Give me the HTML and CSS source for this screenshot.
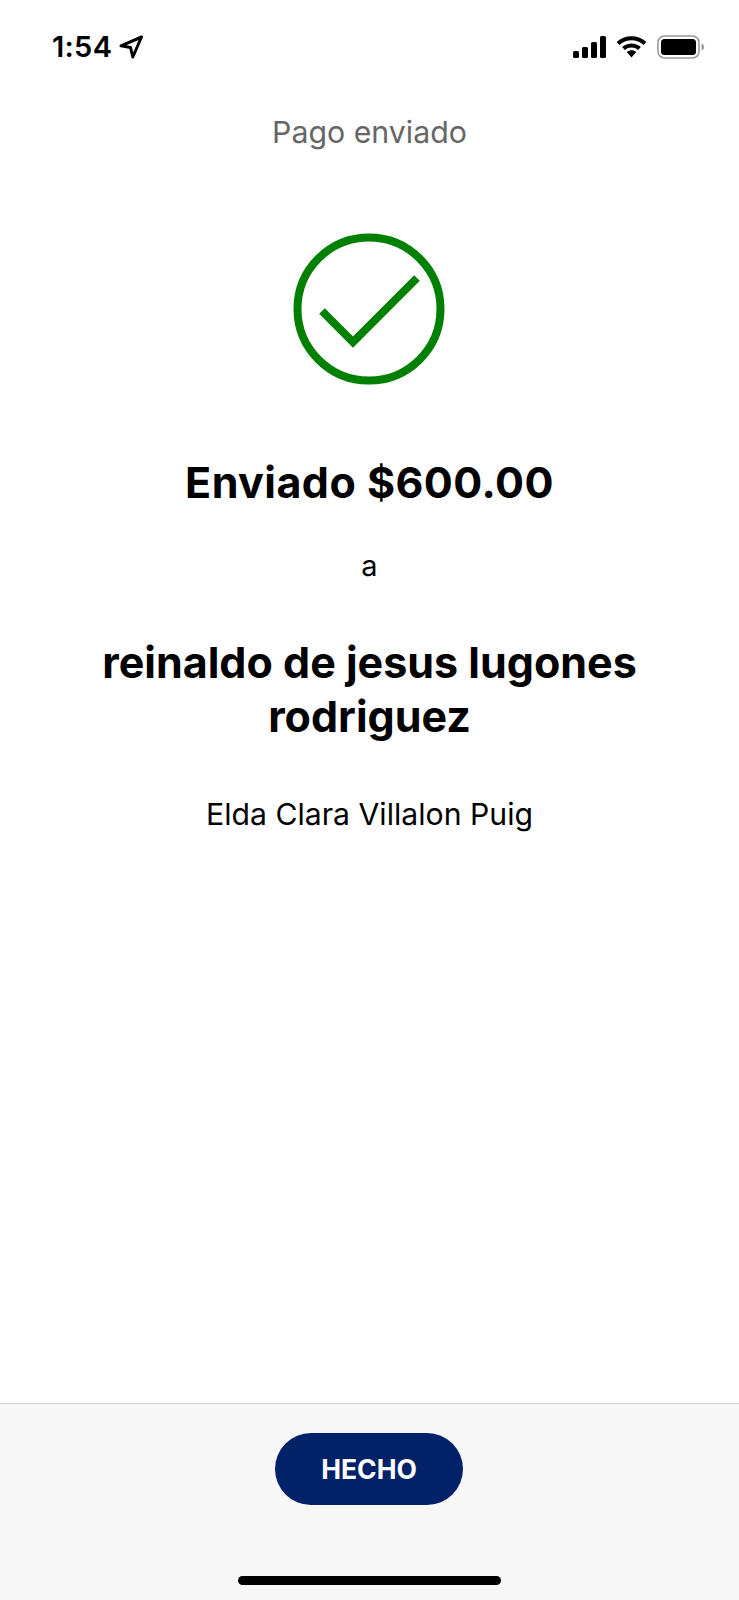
FILE: index.html
```html
<!doctype html>
<html lang="es">
<head>
  <meta charset="UTF-8">
  <meta name="viewport" content="width=device-width, initial-scale=1.0">
  <title>Pago enviado</title>
  <link rel="stylesheet" href="styles.css">
</head>
<body>
  <div class="screen">
    <div class="status-bar">
      <div class="status-left">
        <span class="clock">1:54</span>
        <svg class="arrow" width="26" height="26" viewBox="0 0 26 26"><path d="M23.500 3 3 11.800l9.500 1.700 2.300 9.500z" fill="none" stroke="#000" stroke-width="3" stroke-linejoin="round"/></svg>
      </div>
      <div class="status-right">
        <svg width="33" height="22" viewBox="0 0 33 22"><rect x="0" y="15" width="6" height="7" rx="1.500"/><rect x="9" y="11" width="6" height="11" rx="1.500"/><rect x="18" y="6" width="6" height="16" rx="1.500"/><rect x="27" y="0" width="6" height="22" rx="1.500"/></svg>
        <svg width="31" height="22" viewBox="0 0 31 22"><path d="M2 7.500C9.500.5 21.500.5 29 7.500" fill="none" stroke="#000" stroke-width="4"/><path d="M7.500 12.500c4.500-4 11.500-4 16 0" fill="none" stroke="#000" stroke-width="4"/><path d="M10.800 16 15.500 21.500 20.200 16c-2.700-2.200-6.700-2.200-9.400 0z"/></svg>
        <svg width="48" height="24" viewBox="0 0 48 24"><rect x="1" y="1" width="41" height="22" rx="6.500" fill="none" stroke="#9a9a9a" stroke-width="1.600"/><rect x="4" y="4" width="35" height="16" rx="3.500"/><path d="M44.500 8.500c1.700.5 2.700 2 2.700 3.500s-1 3-2.700 3.500z" fill="#9a9a9a"/></svg>
      </div>
    </div>

    <main class="content">
      <h1 class="page-title">Pago enviado</h1>
      <svg class="check" width="152" height="152" viewBox="0 0 152 152">
        <circle cx="76" cy="76" r="71.500" fill="none" stroke="#008000" stroke-width="8"/>
        <path d="M29 78 60 109 124 45" fill="none" stroke="#008000" stroke-width="8"/>
      </svg>
      <h2 class="amount">Enviado $600.00</h2>
      <p class="connector">a</p>
      <h2 class="recipient">reinaldo de jesus lugones rodriguez</h2>
      <p class="sender">Elda Clara Villalon Puig</p>
    </main>

    <footer class="actions">
      <button class="done-btn">HECHO</button>
      <div class="home-bar"></div>
    </footer>
  </div>
</body>
</html>
```

FILE: styles.css
```css
* { box-sizing: border-box; }
html, body { margin: 0; padding: 0; }
body { font-family: Inter, "Liberation Sans", sans-serif; color: #000; background: #fff; }
.screen { width: 739px; height: 1600px; display: flex; flex-direction: column; overflow: hidden; }
.status-bar { height: 94px; flex: none; padding: 0 34px 0 52px; display: flex; justify-content: space-between; align-items: center; }
.status-left { display: flex; align-items: center; gap: 6px; }
.clock { font-size: 29px; font-weight: 600; line-height: 34px; letter-spacing: 0.3px; }
.status-right { display: flex; align-items: center; gap: 10px; }
.status-right svg, .arrow { display: block; }
.content { flex: 1; display: flex; flex-direction: column; align-items: center; text-align: center; padding: 0 70px; }
.page-title { margin: 17px 0 0; font-size: 30.300px; font-weight: 400; line-height: 42px; color: #666; }
.check { display: block; margin: 80px 1px 0 0; }
.amount { margin: 70px 0 0; font-size: 43px; font-weight: 700; line-height: 54px; letter-spacing: 0.45px; }
.connector { margin: 40px 0 0; font-size: 29px; line-height: 34px; }
.recipient { margin: 52px 0 0; font-size: 43px; font-weight: 700; line-height: 54px; }
.sender { margin: 51px 0 0; font-size: 30.200px; line-height: 40px; }
.actions { height: 197px; flex: none; background: #f7f7f8; border-top: 1px solid #ccc; display: flex; flex-direction: column; align-items: center; padding-top: 29px; }
.done-btn { width: 188px; height: 72px; margin-right: 1px; border: none; border-radius: 36px; background: #012169; color: #fff; font-family: inherit; font-size: 26.500px; font-weight: 700; }
.home-bar { width: 263px; height: 9px; margin-top: 71px; border-radius: 5px; background: #000; }
```
